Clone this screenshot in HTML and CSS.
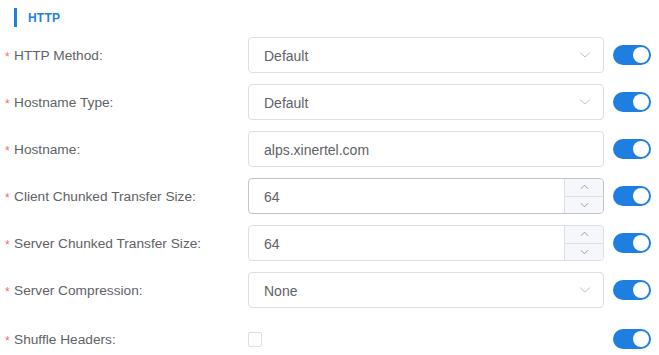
FILE: index.html
```html
<!DOCTYPE html>
<html>
<head>
<meta charset="utf-8">
<link rel="stylesheet" href="styles.css">
</head>
<body>
<div class="section-title"><span class="bar"></span><span class="title">HTTP</span></div>
<div class="form">
  <div class="row">
    <label class="label"><span class="req">*</span>HTTP Method:</label>
    <div class="control select"><span class="value">Default</span><svg class="chev" viewBox="0 0 12 8"><path d="M1 1.5 L6 6 L11 1.5" fill="none" stroke="#c0c4cc" stroke-width="1"/></svg></div>
    <span class="switch"><span class="knob"></span></span>
  </div>
  <div class="row">
    <label class="label"><span class="req">*</span>Hostname Type:</label>
    <div class="control select"><span class="value">Default</span><svg class="chev" viewBox="0 0 12 8"><path d="M1 1.5 L6 6 L11 1.5" fill="none" stroke="#c0c4cc" stroke-width="1"/></svg></div>
    <span class="switch"><span class="knob"></span></span>
  </div>
  <div class="row">
    <label class="label"><span class="req">*</span>Hostname:</label>
    <div class="control"><span class="value">alps.xinertel.com</span></div>
    <span class="switch"><span class="knob"></span></span>
  </div>
  <div class="row">
    <label class="label"><span class="req">*</span>Client Chunked Transfer Size:</label>
    <div class="control number hover"><span class="value">64</span>
      <div class="stepper"><span class="step"><svg viewBox="0 0 10 6"><path d="M1 5 L5 1 L9 5" fill="none" stroke="#909399" stroke-width="1"/></svg></span><span class="step down"><svg viewBox="0 0 10 6"><path d="M1 1 L5 5 L9 1" fill="none" stroke="#909399" stroke-width="1"/></svg></span></div>
    </div>
    <span class="switch"><span class="knob"></span></span>
  </div>
  <div class="row">
    <label class="label"><span class="req">*</span>Server Chunked Transfer Size:</label>
    <div class="control number"><span class="value">64</span>
      <div class="stepper"><span class="step"><svg viewBox="0 0 10 6"><path d="M1 5 L5 1 L9 5" fill="none" stroke="#909399" stroke-width="1"/></svg></span><span class="step down"><svg viewBox="0 0 10 6"><path d="M1 1 L5 5 L9 1" fill="none" stroke="#909399" stroke-width="1"/></svg></span></div>
    </div>
    <span class="switch"><span class="knob"></span></span>
  </div>
  <div class="row">
    <label class="label"><span class="req">*</span>Server Compression:</label>
    <div class="control select"><span class="value">None</span><svg class="chev" viewBox="0 0 12 8"><path d="M1 1.5 L6 6 L11 1.5" fill="none" stroke="#c0c4cc" stroke-width="1"/></svg></div>
    <span class="switch"><span class="knob"></span></span>
  </div>
  <div class="row short">
    <label class="label"><span class="req">*</span>Shuffle Headers:</label>
    <div class="control plain"><span class="checkbox"></span></div>
    <span class="switch"><span class="knob"></span></span>
  </div>
</div>
</body>
</html>
```
FILE: styles.css
```css
html, body {
  margin: 0;
  padding: 0;
  background: #fff;
  font-family: "Liberation Sans", Arial, sans-serif;
  color: #606266;
}
.section-title {
  display: flex;
  align-items: center;
  height: 19px;
  padding: 8px 0 0 14px;
}
.bar {
  width: 3px;
  height: 19px;
  background: #1f7fe0;
}
.title {
  margin-left: 11px;
  font-size: 12px;
  font-weight: bold;
  color: #1f7fe0;
  letter-spacing: 0.2px;
}
.form {
  padding-top: 10px;
}
.row {
  display: flex;
  align-items: center;
  height: 36px;
  margin-bottom: 11px;
}
.row.short {
  height: 28px;
  margin-top: 17px;
}
.label {
  width: 248px;
  flex: none;
  display: flex;
  align-items: center;
  font-size: 13.7px;
  color: #606266;
  padding-top: 1px;
}
.req {
  color: #f56c6c;
  width: 9px;
  padding-left: 5px;
  font-size: 12px;
  position: relative;
  top: 1px;
}
.control {
  width: 356px;
  height: 36px;
  box-sizing: border-box;
  border: 1px solid #dcdfe6;
  border-radius: 4px;
  display: flex;
  align-items: center;
  font-size: 14px;
  color: #606266;
  overflow: hidden;
}
.control .value {
  flex: 1;
  padding-left: 15px;
  padding-top: 1px;
}
.control.hover {
  border-color: #c0c4cc;
}
.chev {
  width: 12px;
  height: 8px;
  margin-right: 12px;
}
.stepper {
  width: 38px;
  height: 100%;
  display: flex;
  flex-direction: column;
  background: #f5f7fa;
  border-left: 1px solid #dcdfe6;
}
.step {
  flex: 1;
  display: flex;
  align-items: center;
  justify-content: center;
}
.step svg {
  width: 9px;
  height: 6px;
}
.step.down {
  border-top: 1px solid #dcdfe6;
}
.control.plain {
  border: none;
}
.checkbox {
  width: 12px;
  height: 13px;
  border: 1px solid #dcdfe6;
  border-radius: 2px;
  background: #fff;
}
.switch {
  margin-left: 9px;
  width: 38px;
  height: 20px;
  border-radius: 10px;
  background: #1f7fe0;
  position: relative;
  flex: none;
}
.knob {
  position: absolute;
  right: 2px;
  top: 2px;
  width: 16px;
  height: 16px;
  border-radius: 50%;
  background: #fff;
}
```
